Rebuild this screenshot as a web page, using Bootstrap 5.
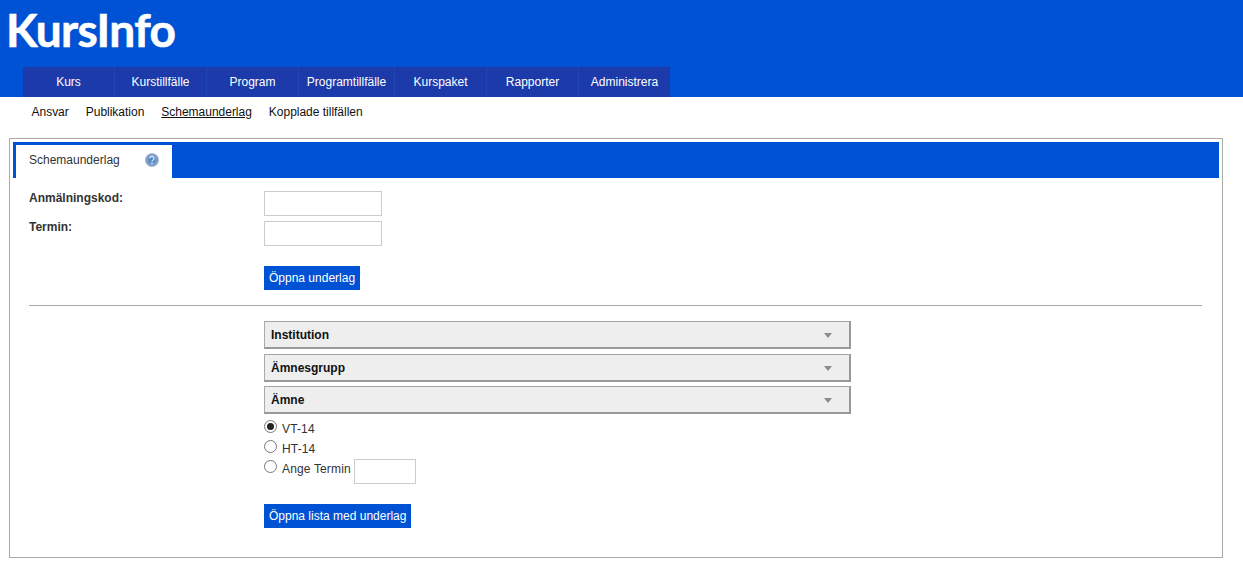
<!DOCTYPE html>
<html lang="sv">
<head>
<meta charset="utf-8">
<title>KursInfo</title>
<link href="https://cdn.jsdelivr.net/npm/bootstrap@5.3.0/dist/css/bootstrap.min.css" rel="stylesheet">
<style>
html,body{height:577px;overflow:hidden}
body{font-family:"Liberation Sans",Arial,sans-serif;font-size:12px;color:#333;background:#fff}
.top-head{background:#0052d4;height:97px}
.logo-text{font-family:Lato,sans-serif;font-weight:700;font-size:46px;line-height:46px;color:#fff;padding:7px 0 0 6px;height:67px;letter-spacing:-.6px;-webkit-text-stroke:.6px #fff}
.main-tabs{margin-left:23px;height:30px;width:647px}
.main-tabs a{display:block;background:#1c3aa9;color:#fff;text-decoration:none;line-height:30px;height:30px;text-align:center;width:92px;border-right:1px solid #1f47b5}
.main-tabs a.wide{width:96px}
.main-tabs a.last{width:91px;border-right:0}
.sub-tabs{height:41px;padding:8px 0 0 23px;line-height:14px;letter-spacing:-.015px}
.sub-tabs a{color:#111;text-decoration:none;padding:0 8.5px}
.sub-tabs a.on{text-decoration:underline}
.frame{margin:0 20px 0 9px;height:420px;border:1px solid #aaa;padding:3px}
.tab-strip{background:#0052d4;height:36px;padding:3px 0 0 3px}
.tab-one{width:156px;height:33px;background:#fff;padding:7px 13px 0;color:#333;display:flex;justify-content:space-between}
.tab-one span{line-height:16px}
.help-ico{margin:1px 0 0}
.form-zone{padding:13px 17px 0 16px}
.line-a{display:flex;height:30px}
.name-col{width:235px;font-weight:700;line-height:12px}
.first-line .name-col{padding-top:1px}
.txt-box{width:118px;height:25px;border:1px solid #ccc;background:#fff;padding:0;display:block}
.btn-row{padding-top:15px}
.act-btn{display:inline-block;background:#0052d4;color:#fff;border:0;border-radius:0;height:24px;line-height:24px;padding:0 5px;font-size:12px}
.divider{border:0;border-top:1px solid #aaa;opacity:1;margin:15px 0}
.right-col{margin-left:235px}
.drop-bar{width:587px;height:28px;background:#eee;border-style:solid;border-width:1px 2px 2px 1px;border-color:#a5a5a5 #999 #999 #aaa;font-weight:700;color:#111;line-height:25px;padding:1px 6px 0;margin-bottom:5px;display:flex;justify-content:space-between;align-items:center}
.drop-bar.tight{margin-bottom:4px}
.arrow-down{width:0;height:0;border-left:4px solid transparent;border-right:4px solid transparent;border-top:5px solid #8c8c8c;margin:0 11px 0 0}
.radio-row{display:flex;align-items:flex-start;height:20px;line-height:20px;color:#333;letter-spacing:.15px}
.radio-dot{width:13px;height:13px;border:1px solid #777;border-radius:50%;background:#fff;margin:1px 5px 0 0;flex:none;display:flex;align-items:center;justify-content:center}
.radio-dot i{width:7px;height:7px;border-radius:50%;background:#222;display:block}
.small-box{width:62px;height:25px;border:1px solid #ccc;margin-left:3px;padding:0}
.last-btn{padding-top:25px}
</style>
</head>
<body>
<div class="top-head">
  <div class="logo-text">KursInfo</div>
  <nav class="main-tabs d-flex">
    <a href="#">Kurs</a><a href="#">Kurstillfälle</a><a href="#">Program</a><a href="#" class="wide">Programtillfälle</a><a href="#">Kurspaket</a><a href="#">Rapporter</a><a href="#" class="last">Administrera</a>
  </nav>
</div>
<div class="sub-tabs">
  <a href="#">Ansvar</a><a href="#">Publikation</a><a href="#" class="on">Schemaunderlag</a><a href="#">Kopplade tillfällen</a>
</div>
<div class="frame">
  <div class="tab-strip">
    <div class="tab-one">
      <span>Schemaunderlag</span>
      <svg class="help-ico" width="14" height="14" viewBox="0 0 14 14"><defs><radialGradient id="g" cx=".5" cy=".5" r=".6"><stop offset="0" stop-color="#3f76bf"/><stop offset=".7" stop-color="#7fa3d0"/><stop offset="1" stop-color="#c2cbd8"/></radialGradient></defs><circle cx="7" cy="7" r="6.6" fill="url(#g)" stroke="#9fabbd" stroke-width=".7"/><path d="M5 5.4a2 2 0 1 1 3 1.7c-.7.4-1 .7-1 1.4" fill="none" stroke="#e4edf8" stroke-width="1.2"/><circle cx="7" cy="10.4" r=".8" fill="#e4edf8"/></svg>
    </div>
  </div>
  <div class="form-zone">
    <div class="line-a first-line">
      <div class="name-col">Anmälningskod:</div>
      <input class="txt-box" type="text" aria-label="Anmälningskod">
    </div>
    <div class="line-a">
      <div class="name-col">Termin:</div>
      <input class="txt-box" type="text" aria-label="Termin">
    </div>
    <div class="right-col btn-row">
      <button class="act-btn" type="button">Öppna underlag</button>
    </div>
    <hr class="divider">
    <div class="right-col">
      <div class="drop-bar">Institution<span class="arrow-down"></span></div>
      <div class="drop-bar tight">Ämnesgrupp<span class="arrow-down"></span></div>
      <div class="drop-bar">Ämne<span class="arrow-down"></span></div>
      <div class="radio-row"><span class="radio-dot"><i></i></span>VT-14</div>
      <div class="radio-row"><span class="radio-dot"></span>HT-14</div>
      <div class="radio-row"><span class="radio-dot"></span>Ange Termin<input class="small-box" type="text" aria-label="Ange Termin"></div>
      <div class="last-btn"><button class="act-btn" type="button">Öppna lista med underlag</button></div>
    </div>
  </div>
</div>
<script src="https://cdn.jsdelivr.net/npm/bootstrap@5.3.0/dist/js/bootstrap.bundle.min.js"></script>
</body>
</html>
